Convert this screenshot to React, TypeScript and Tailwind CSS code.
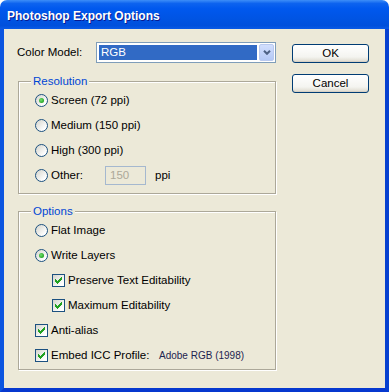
import React from 'react'

const CHECK_COLS = [4, 5, 6, 5, 4, 3, 2]

function Radio({ checked }: { checked?: boolean }) {
    return (
        <span className="flex h-[13px] w-[13px] shrink-0 items-center justify-center rounded-full border border-[#1c5180] bg-[linear-gradient(135deg,#d4d4cc,#ffffff_80%)]">
            {checked && (
                <span className="h-[5px] w-[5px] rounded-full bg-[radial-gradient(circle_at_40%_40%,#72e06f,#21a121_75%)]" />
            )}
        </span>
    )
}

function Check({ checked }: { checked?: boolean }) {
    return (
        <span className="flex h-[13px] w-[13px] shrink-0 border border-[#1c5180] bg-[linear-gradient(135deg,#d4d4cc,#ffffff_80%)]">
            {checked && (
                <svg width="11" height="11" viewBox="0 0 11 11">
                    {CHECK_COLS.map((top, i) => (
                        <rect key={i} x={2 + i} y={top} width="1" height="3" fill="#21a121" />
                    ))}
                </svg>
            )}
        </span>
    )
}

function Row({ children, className = '' }: { children: React.ReactNode; className?: string }) {
    return <div className={`flex h-[25px] items-center ${className}`}>{children}</div>
}

function Group({ title, children, className = '' }: { title: string; children: React.ReactNode; className?: string }) {
    return (
        <fieldset
            className={`ml-px border border-[#aca899] shadow-[1px_1px_0_#ffffff,inset_1px_1px_0_#ffffff] ${className}`}
        >
            <legend className="ml-[12px] bg-[#ece9d8] px-[2px] leading-[14px] text-[#0046d5]">{title}</legend>
            {children}
        </fieldset>
    )
}

function XpButton({ label }: { label: string }) {
    return (
        <button className="flex h-[19px] w-[77px] items-center justify-center rounded-[3px] border border-[#003c74] bg-[linear-gradient(to_bottom,#ffffff,#f4f4f0_70%,#dcd8cc)] shadow-[inset_0_-1px_0_#d6d0c5]">
            {label}
        </button>
    )
}

export default function App() {
    return (
        <div className="flex h-[392px] w-[389px] flex-col font-['Liberation_Sans',Arial,sans-serif] text-[11.5px] text-black">
            <div className="flex h-[29px] shrink-0 items-center rounded-t-[7px] bg-[linear-gradient(to_bottom,#3d8ef8_0%,#0d63ef_12%,#0058ee_30%,#0054e3_65%,#0050dc_88%,#0a5ae6_100%)] pl-[7px] pt-[3px]">
                <span className="text-[12px] font-bold text-white [text-shadow:1px_1px_0_#0a1a8f]">
                    Photoshop Export Options
                </span>
            </div>

            <div className="flex flex-1 gap-[16px] border-x-4 border-b-4 border-l-[#0b55e0] border-r-[#0640d0] border-b-[#0638cf] bg-[#ece9d8] pl-[13px] pt-[13px]">
                <div className="flex w-[259px] flex-col">
                    <div className="flex h-[21px] items-center">
                        <span className="w-[79px]">Color Model:</span>
                        <div className="flex h-[21px] w-[180px] border border-[#7f9db9] bg-white p-px">
                            <div className="m-px mr-[2px] flex flex-1 items-center bg-[#316ac5] pl-[2px] text-white">RGB</div>
                            <div className="flex w-[15px] items-center justify-center rounded-[2px] border border-[#b9c9ef] bg-[linear-gradient(to_bottom,#d2dffd,#b4c8f6)]">
                                <svg width="8" height="5" viewBox="0 0 8 5">
                                    <path d="M1 0.8 L4 3.8 L7 0.8" fill="none" stroke="#4d6185" strokeWidth="2" />
                                </svg>
                            </div>
                        </div>
                    </div>

                    <Group title="Resolution" className="mt-[11px] pb-[5px]">
                        <div className="pl-[16px]">
                            <Row className="gap-[3px]">
                                <Radio checked />
                                <span>Screen (72 ppi)</span>
                            </Row>
                            <Row className="gap-[3px]">
                                <Radio />
                                <span>Medium (150 ppi)</span>
                            </Row>
                            <Row className="gap-[3px]">
                                <Radio />
                                <span>High (300 ppi)</span>
                            </Row>
                            <Row>
                                <Radio />
                                <span className="ml-[3px] w-[54px]">Other:</span>
                                <div className="flex h-[19px] w-[41px] items-center border border-[#a5b8cf] pl-[4px] text-[#aca899]">
                                    150
                                </div>
                                <span className="ml-[9px]">ppi</span>
                            </Row>
                        </div>
                    </Group>

                    <Group title="Options" className="mt-[10px] pb-px">
                        <div className="pl-[16px]">
                            <Row className="gap-[3px]">
                                <Radio />
                                <span>Flat Image</span>
                            </Row>
                            <Row className="gap-[3px]">
                                <Radio checked />
                                <span>Write Layers</span>
                            </Row>
                            <Row className="gap-[3px] pl-[17px]">
                                <Check checked />
                                <span>Preserve Text Editability</span>
                            </Row>
                            <Row className="gap-[3px] pl-[17px]">
                                <Check checked />
                                <span>Maximum Editability</span>
                            </Row>
                            <Row className="gap-[3px]">
                                <Check checked />
                                <span>Anti-alias</span>
                            </Row>
                            <Row>
                                <Check checked />
                                <span className="ml-[3px] w-[108px]">Embed ICC Profile:</span>
                                <span className="text-[10px] text-[#1d2450]">Adobe RGB (1998)</span>
                            </Row>
                        </div>
                    </Group>
                </div>

                <div className="flex flex-col gap-[11px] pt-[2px]">
                    <XpButton label="OK" />
                    <XpButton label="Cancel" />
                </div>
            </div>
        </div>
    )
}
